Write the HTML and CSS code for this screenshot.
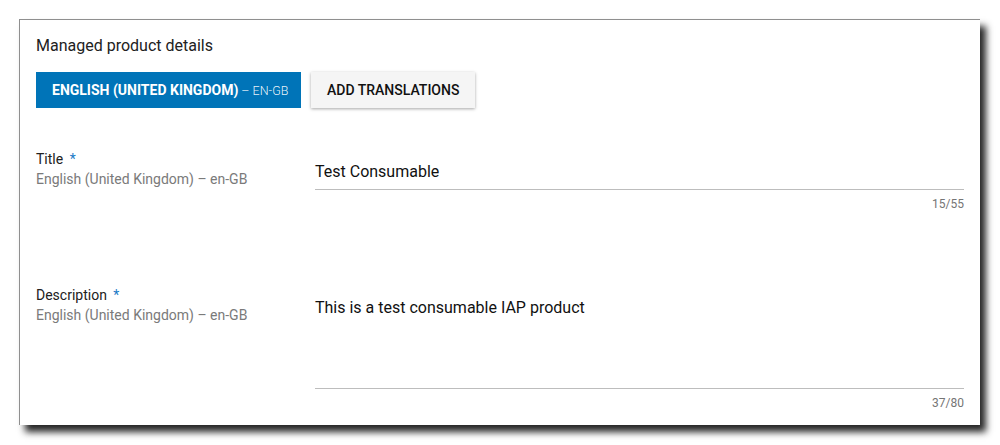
FILE: index.html
```html
<!DOCTYPE html>
<html lang="en">
<head>
<meta charset="utf-8">
<title>Managed product details</title>
<link rel="stylesheet" href="styles.css">
</head>
<body>
<div class="card">
  <h2 class="heading">Managed product details</h2>
  <div class="tabs">
    <button class="btn btn-primary"><span class="lang">ENGLISH (UNITED KINGDOM)</span><span class="code"> – EN-GB</span></button>
    <button class="btn btn-secondary">ADD TRANSLATIONS</button>
  </div>
  <div class="row row-title">
    <div class="label">
      <div class="label-name">Title <span class="req">*</span></div>
      <div class="label-sub">English (United Kingdom) – en-GB</div>
    </div>
    <div class="field">
      <div class="input">Test Consumable</div>
      <div class="counter">15/55</div>
    </div>
  </div>
  <div class="row row-desc">
    <div class="label">
      <div class="label-name">Description <span class="req">*</span></div>
      <div class="label-sub">English (United Kingdom) – en-GB</div>
    </div>
    <div class="field">
      <div class="input textarea">This is a test consumable IAP product</div>
      <div class="counter">37/80</div>
    </div>
  </div>
</div>
</body>
</html>
```
FILE: styles.css
```css
html, body {
  margin: 0;
  padding: 0;
  background: #ffffff;
}
body {
  box-sizing: border-box;
  min-height: 445px;
  padding: 19px 0 20px 19px;
  font-family: Roboto, "Liberation Sans", Arial, sans-serif;
  color: #212121;
}
.card {
  box-sizing: border-box;
  width: 961px;
  height: 406px;
  background: #ffffff;
  border-top: 1px solid #8f8f8f;
  border-left: 1px solid #8f8f8f;
  box-shadow: 6px 7px 7px rgba(0, 0, 0, 0.85);
  padding: 16px 16px 0 16px;
}
.heading {
  margin: 0;
  font-size: 16px;
  line-height: 20px;
  font-weight: 400;
  color: #212121;
}
.tabs {
  display: flex;
  gap: 10px;
  margin-top: 16px;
}
.btn {
  height: 36px;
  border: none;
  padding: 0 16px;
  font-family: Roboto, "Liberation Sans", Arial, sans-serif;
  font-size: 14px;
  cursor: pointer;
  display: flex;
  align-items: center;
  white-space: nowrap;
}
.btn-primary {
  width: 265px;
  background: #0074b8;
  color: #ffffff;
}
.btn-primary .lang {
  font-weight: 700;
  font-size: 14px;
}
.btn-primary .code {
  font-weight: 300;
  font-size: 12.5px;
  color: rgba(255, 255, 255, 0.92);
  white-space: pre;
}
.btn-secondary {
  width: 164px;
  background: #f5f5f5;
  color: #111111;
  font-weight: 500;
  box-shadow: 0 1px 3px rgba(0, 0, 0, 0.35);
}
.row {
  display: grid;
  grid-template-columns: 279px 1fr;
}
.row-title {
  margin-top: 41px;
}
.row-desc {
  margin-top: 73px;
}
.label-name {
  font-size: 14px;
  line-height: 20px;
  color: #212121;
}
.req {
  color: #1a7bc7;
  margin-left: 3px;
}
.label-sub {
  font-size: 14px;
  line-height: 20px;
  color: #7a7a7a;
}
.field {
  display: flex;
  flex-direction: column;
}
.input {
  padding-top: 11px;
  padding-bottom: 5px;
  font-size: 16px;
  line-height: 24px;
  color: #111111;
  border-bottom: 1px solid #bdbdbd;
}
.textarea {
  padding-bottom: 68px;
}
.counter {
  margin-top: 6px;
  text-align: right;
  font-size: 12px;
  line-height: 16px;
  color: #757575;
}
```
